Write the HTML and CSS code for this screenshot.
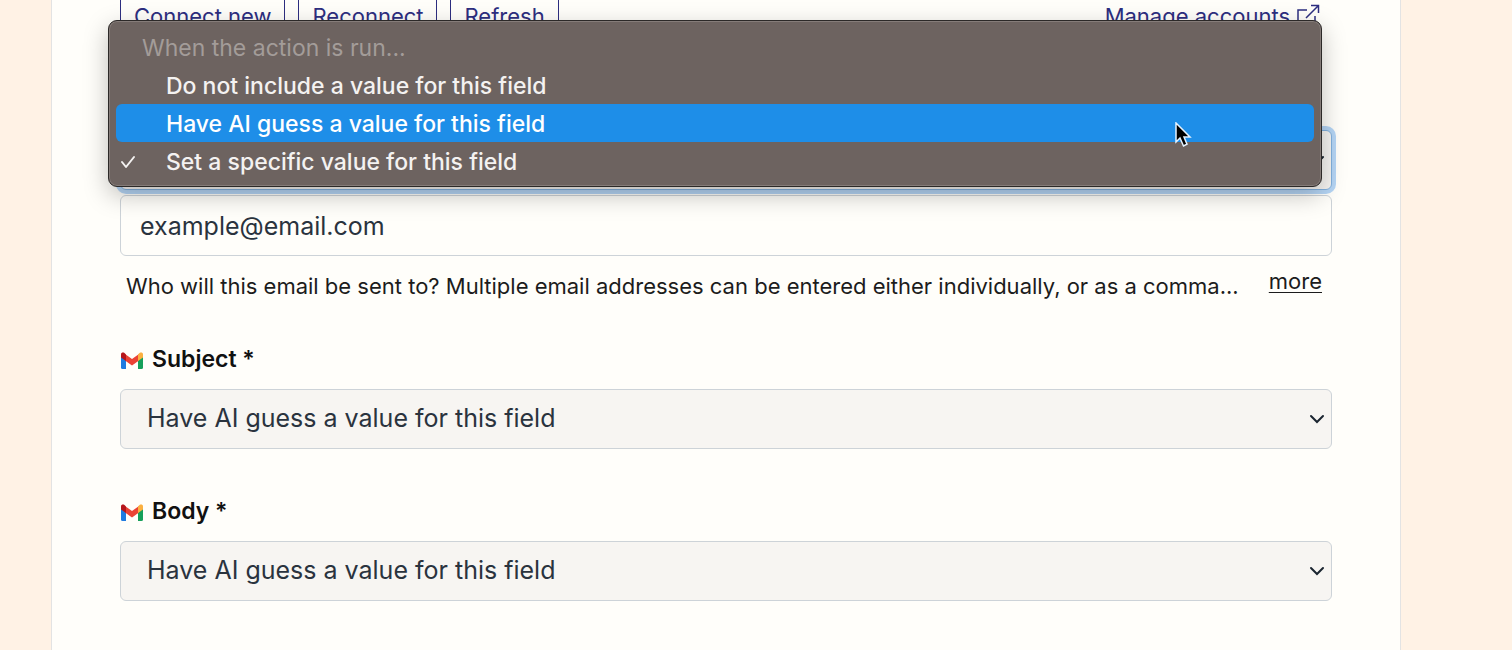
FILE: index.html
```html
<!DOCTYPE html>
<html lang="en">
<head>
  <meta charset="UTF-8">
  <meta name="viewport" content="width=device-width, initial-scale=1.0">
  <title>Gmail action setup</title>
  <link rel="stylesheet" href="styles.css">
</head>
<body>
  <!-- shared icons -->
  <svg class="sprite" aria-hidden="true">
    <symbol id="gmail" viewBox="0 0 24 17">
      <path fill="#1f7be0" d="M1 4l5 3v10H2.500Q1 17 1 15.500z"/>
      <path fill="#16a05a" d="M23 4l-5 3v10h3.500q1.500 0 1.500-1.500z"/>
      <path fill="#ea4335" d="M5 2l7 5 7-5v6.500l-7 5-7-5z"/>
      <path fill="#b5161b" d="M1 5V2.500C1 .5 3 0 4.500 1L6 2.500V9L1 5.500z"/>
      <path fill="#fbb040" d="M23 5V2.500C23 .5 21 0 19.500 1L18 2.500V9l5-3.500z"/>
    </symbol>
    <symbol id="chevron" viewBox="0 0 16 10">
      <path d="M2 2l6 6 6-6" fill="none" stroke="#1b2530" stroke-width="2" stroke-linecap="round"/>
    </symbol>
  </svg>

  <main class="card">
    <div class="account-bar">
      <button type="button" class="btn">Connect new</button>
      <button type="button" class="btn">Reconnect</button>
      <button type="button" class="btn">Refresh</button>
      <a href="#" class="manage">Manage accounts
        <svg width="24" height="24" viewBox="0 0 24 24" fill="none" stroke="#2d2e80" stroke-width="1.5" aria-hidden="true">
          <path d="M11 6H2v16h17V12M15 1.500h7.500V9M22 2L10 14"/>
        </svg>
      </a>
    </div>

    <form>
      <div class="field recipient">
        <div class="select-wrap">
          <select id="to-mode" class="focused" aria-label="Recipient mode">
            <option>Set a specific value for this field</option>
          </select>
          <svg class="chevron" aria-hidden="true"><use href="#chevron"/></svg>

          <div class="menu" role="listbox" aria-label="Recipient mode options">
            <div class="menu-title">When the action is run...</div>
            <button type="button" class="menu-item" role="option">Do not include a value for this field</button>
            <button type="button" class="menu-item active" role="option">Have AI guess a value for this field</button>
            <button type="button" class="menu-item" role="option" aria-selected="true">
              <svg class="check" width="16" height="16" viewBox="0 0 16 16" aria-hidden="true">
                <path d="M2 8l4 5 8-10" fill="none" stroke="#f4f2f1" stroke-width="2" stroke-linecap="round" stroke-linejoin="round"/>
              </svg>
              Set a specific value for this field
            </button>
            <svg class="cursor" width="17" height="26" viewBox="0 0 17 26" aria-hidden="true">
              <path d="M1 1v19l4-4 3.500 8 3.500-1.800-3-7.200H15z" fill="#000" stroke="#e6f3ff" stroke-width="1.500"/>
            </svg>
          </div>
        </div>
        <input type="text" id="to" value="example@email.com" aria-label="Recipient email" aria-describedby="to-help">
        <div class="help">
          <p id="to-help">Who will this email be sent to? Multiple email addresses can be entered either individually, or as a comma...</p>
          <a href="#">more</a>
        </div>
      </div>

      <div class="field">
        <label for="subject"><svg class="gmail" aria-hidden="true"><use href="#gmail"/></svg>Subject *</label>
        <div class="select-wrap">
          <select id="subject">
            <option>Have AI guess a value for this field</option>
          </select>
          <svg class="chevron" aria-hidden="true"><use href="#chevron"/></svg>
        </div>
      </div>

      <div class="field">
        <label for="body"><svg class="gmail" aria-hidden="true"><use href="#gmail"/></svg>Body *</label>
        <div class="select-wrap">
          <select id="body">
            <option>Have AI guess a value for this field</option>
          </select>
          <svg class="chevron" aria-hidden="true"><use href="#chevron"/></svg>
        </div>
      </div>
    </form>
  </main>
</body>
</html>
```
FILE: styles.css
```css
* {
  box-sizing: border-box;
}
body {
  margin: 0;
  background: #fff2e5;
  color: #1c1c1c;
  font-family: Inter, "Liberation Sans", sans-serif;
  font-size: 22px;
  line-height: 30px;
}
.sprite {
  position: absolute;
  width: 0;
  height: 0;
}
.card {
  display: flow-root;
  min-height: 100vh;
  margin: 0 111px 0 51px;
  padding: 0 68px;
  background: #fffefa;
  border: solid #e3e3e3;
  border-width: 0 1px;
}

/* account buttons, scrolled partly out of view */
.account-bar {
  display: flex;
  gap: 13px;
  height: 48px;
  margin-top: -8px;
  margin-bottom: 90px;
}
.btn {
  padding: 0 13px;
  background: none;
  border: 1px solid #2d2e80;
  color: #2d2e80;
  font: inherit;
}
.manage {
  display: flex;
  align-items: center;
  gap: 6px;
  margin-left: auto;
  margin-right: 12px;
  color: #2d2e80;
  text-decoration: none;
}

/* form fields */
.field {
  margin-bottom: 47px;
}
.recipient {
  margin-bottom: 42px;
}
label {
  display: flex;
  align-items: center;
  gap: 8px;
  margin-bottom: 15px;
  color: #111;
  font-size: 23px;
  font-weight: 600;
}
.gmail {
  width: 24px;
  height: 17px;
  margin-top: 3px;
}
.select-wrap {
  position: relative;
}
select,
input {
  display: block;
  width: 100%;
  height: 60px;
  border: 1px solid #cdd3d8;
  border-radius: 6px;
  color: #2a333e;
  font: inherit;
  font-size: 25px;
}
select {
  appearance: none;
  padding: 0 26px 2px;
  background: #f7f5f2;
}
input {
  height: 61px;
  margin-top: 5px;
  padding: 0 19px;
  background: transparent;
}
.focused {
  border-color: #82b1df;
  box-shadow: 0 0 0 4px #b5d5f5;
}
.chevron {
  position: absolute;
  top: 25px;
  right: 7px;
  width: 16px;
  height: 10px;
  pointer-events: none;
}
.help {
  display: flex;
  justify-content: space-between;
  gap: 20px;
  margin-top: 10px;
  padding: 0 10px 1px 6px;
}
.help p {
  min-width: 0;
  margin: 0;
  padding-top: 5px;
  overflow: hidden;
  white-space: nowrap;
  text-overflow: ellipsis;
}
.help a {
  color: inherit;
  text-decoration-thickness: 1px;
  text-underline-offset: 3px;
}

/* open dropdown */
.menu {
  position: absolute;
  z-index: 1;
  top: -110px;
  left: -12px;
  right: 10px;
  padding: 7px 7px 6px;
  background: #6d6360;
  border: 1px solid #2c2928;
  border-radius: 9px;
  box-shadow: inset 0 0 0 1px #857c79, 0 8px 24px rgba(0, 0, 0, 0.25);
  font-size: 23px;
  line-height: 36px;
}
.menu-title {
  padding: 2px 26px 0;
  color: #a39c99;
}
.menu-item {
  position: relative;
  display: block;
  width: 100%;
  height: 38px;
  padding: 2px 50px 0;
  background: none;
  border: 0;
  border-radius: 6px;
  color: #f4f2f1;
  font: inherit;
  font-weight: 500;
  text-align: left;
}
.menu-item.active {
  background: #1e8ee8;
  color: #fff;
}
.check {
  position: absolute;
  top: 12px;
  left: 4px;
}
.cursor {
  position: absolute;
  top: 101px;
  right: 129px;
}
```
